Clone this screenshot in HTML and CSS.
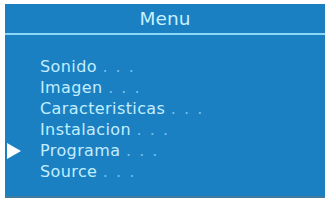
FILE: index.html
```
<!DOCTYPE html>
<html lang="es">
<head>
  <meta charset="UTF-8">
  <title>Menu</title>
  <link rel="stylesheet" href="styles.css">
</head>
<body>
<div class="menu">
  <div class="menu-title">Menu</div>
  <ul class="menu-list">
    <li>Sonido <span class="dots">. . .</span></li>
    <li>Imagen <span class="dots">. . .</span></li>
    <li>Caracteristicas <span class="dots">. . .</span></li>
    <li>Instalacion <span class="dots">. . .</span></li>
    <li class="selected">Programa <span class="dots">. . .</span></li>
    <li>Source <span class="dots">. . .</span></li>
  </ul>
</div>
</body>
</html>
```

FILE: styles.css
```
body {
  margin: 0;
  background: #fff;
  font-family: "DejaVu Sans", sans-serif;
}

/* 全体パネル */
.menu {
  margin: 4px 4px 0 5px;
  width: 320px;
  height: 192px;
  background: #1b80c2;
  border-bottom: 2px solid #3f7aa0;
  position: relative;
}

/* タイトル */
.menu-title {
  height: 29px;
  line-height: 29px;
  text-align: center;
  font-size: 18.5px;
  color: #c6f1ff;
  border-bottom: 2px solid #8ad8f6;
}

.menu-list {
  list-style: none;
  margin: 0;
  padding: 21px 0 0 35px;
  font-size: 16px;
  line-height: 21px;
  letter-spacing: 0.4px;
  color: #c2eeff;
}

.menu-list li {
  position: relative;
}

.dots {
  color: #72c2ea;
  letter-spacing: 1.5px;
}

/* 選択中の矢印 */
.selected::before {
  content: "";
  position: absolute;
  left: -33px;
  top: 3px;
  border-top: 8px solid transparent;
  border-bottom: 8px solid transparent;
  border-left: 14px solid #fff;
}
```
